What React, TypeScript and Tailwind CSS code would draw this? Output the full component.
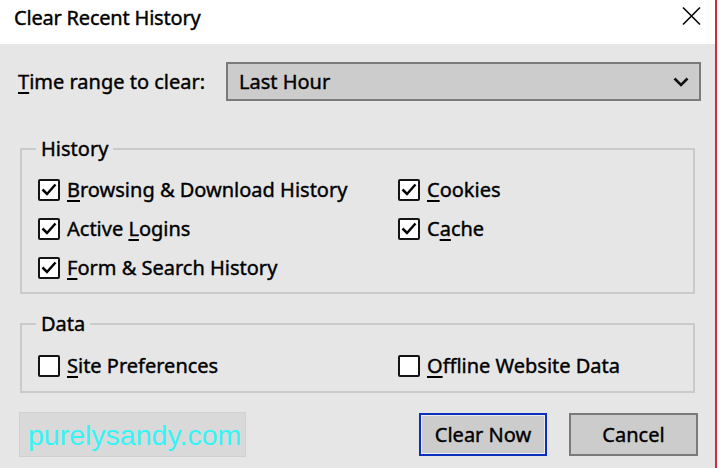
import React from "react";

function Box({ checked }: { checked: boolean }) {
  return (
    <span className="w-[22px] h-[22px] border-2 border-[#141414] rounded-[2px] bg-white shrink-0 flex">
      {checked && (
        <svg width="18" height="18" viewBox="0 0 18 18">
          <path d="M2.5 8.5 L7 13 L15.5 3.5" fill="none" stroke="#000" strokeWidth="2.5" />
        </svg>
      )}
    </span>
  );
}

const txt = "text-[20px] leading-[26px] text-black [-webkit-text-stroke:0.4px_#000]";

function Check({
  checked,
  pre,
  k,
  post,
}: {
  checked: boolean;
  pre: string;
  k: string;
  post: string;
}) {
  return (
    <div className="h-[39px] flex items-center gap-[7px]">
      <Box checked={checked} />
      <span className={"whitespace-nowrap " + txt}>
        {pre}
        <span className="underline decoration-[1.5px] underline-offset-[3px]">{k}</span>
        {post}
      </span>
    </div>
  );
}

export default function App() {
  return (
    <div className="w-[720px] h-[468px] overflow-hidden bg-white flex font-['Noto_Sans','Open_Sans',sans-serif]">
      <div className="w-[717px] h-full flex flex-col border-r-2 border-[#d42a3c] shrink-0">
        {/* Title bar */}
        <div className="h-[44px] bg-white flex items-start justify-between pl-[14px] pr-[14px] shrink-0">
          <span className="pt-[5px] text-[20px] leading-[26px] tracking-[-0.2px] text-black [-webkit-text-stroke:0.4px_#000]">
            Clear Recent History
          </span>
          <svg className="mt-[7px]" width="19" height="18" viewBox="0 0 19 18">
            <path d="M1 0.5 L18 17.5 M18 0.5 L1 17.5" stroke="#000" strokeWidth="1.5" fill="none" />
          </svg>
        </div>

        {/* Body */}
        <div className="flex-1 bg-[#e6e6e6] flex flex-col">
          {/* Time range row */}
          <div className="mt-[18px] flex items-center h-[39px]">
            <span className={"ml-[18px] w-[207px] whitespace-nowrap " + txt}>
              <span className="underline decoration-[1.5px] underline-offset-[3px]">T</span>ime range to clear:
            </span>
            <div className="ml-[1px] w-[475px] h-[39px] bg-[#cccccc] border-2 border-[#7a7a7a] flex items-center justify-between pl-[11px] pr-[10px]">
              <span className={txt}>Last Hour</span>
              <svg width="16" height="10" viewBox="0 0 16 10">
                <path d="M1.5 1.5 L8 8 L14.5 1.5" stroke="#111" strokeWidth="2.6" fill="none" />
              </svg>
            </div>
          </div>

          {/* History group */}
          <fieldset className="mt-[35px] ml-[20px] w-[675px] border-2 border-[#cacaca]">
            <legend className={"ml-[14px] px-[5px] " + txt}>History</legend>
            <div className="pt-[8px] pb-[5px] pl-[16px] grid grid-cols-[360px_1fr]">
              <Check checked pre="" k="B" post="rowsing & Download History" />
              <Check checked pre="" k="C" post="ookies" />
              <Check checked pre="Active " k="L" post="ogins" />
              <Check checked pre="C" k="a" post="che" />
              <Check checked pre="" k="F" post="orm & Search History" />
            </div>
          </fieldset>

          {/* Data group */}
          <fieldset className="mt-[17px] ml-[20px] w-[675px] border-2 border-[#cacaca]">
            <legend className={"ml-[14px] px-[5px] " + txt}>Data</legend>
            <div className="pt-[9px] pb-[6px] pl-[16px] grid grid-cols-[360px_1fr]">
              <Check checked={false} pre="" k="S" post="ite Preferences" />
              <Check checked={false} pre="" k="O" post="ffline Website Data" />
            </div>
          </fieldset>

          {/* Bottom row */}
          <div className="mt-[19px] flex items-center">
            <div className="ml-[19px] w-[227px] h-[45px] bg-[#d9d9d9] border border-[#d0d0d0] flex items-center pl-[8px]">
              <span className="font-['Liberation_Sans',Arial,sans-serif] text-[28.5px] leading-[32px] text-[#33f5f5]">
                purelysandy.com
              </span>
            </div>
            <button className={"ml-[173px] w-[128px] h-[43px] bg-[#cccccc] border-2 border-[#0b2fbf] shadow-[inset_0_0_0_1px_#ececec] " + txt}>
              Clear Now
            </button>
            <button className={"ml-[22px] w-[129px] h-[43px] bg-[#cccccc] border-2 border-[#7a7a7a] " + txt}>
              Cancel
            </button>
          </div>
        </div>
      </div>
      <div className="flex-1 bg-white" />
    </div>
  );
}
